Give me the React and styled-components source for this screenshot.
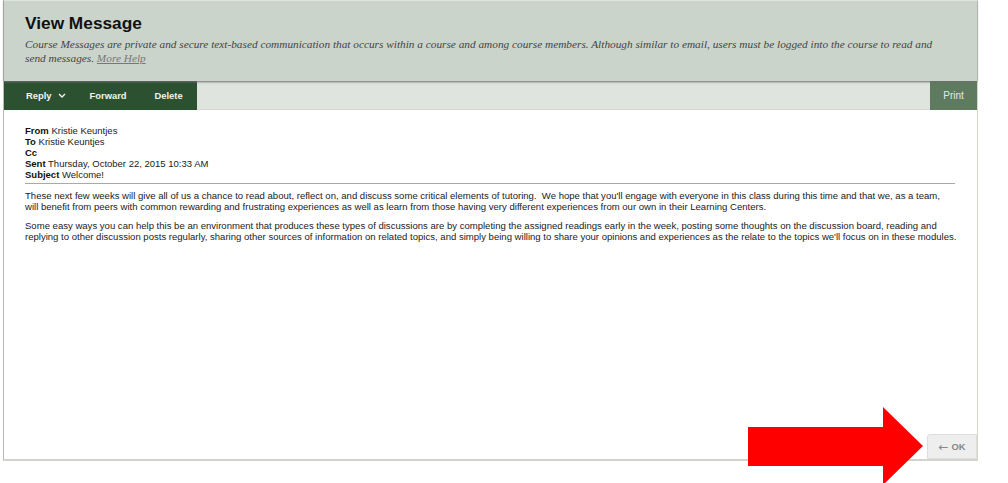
import React from "react";
import styled, { createGlobalStyle } from "styled-components";

const GlobalStyle = createGlobalStyle`
  html, body {
    margin: 0;
    background: #fff;
  }
`;

const Page = styled.div`
  position: relative;
  width: 1008px;
  height: 483px;
  overflow: hidden;
  font-family: "Liberation Sans", Arial, sans-serif;
`;
const Panel = styled.div`
  display: flex;
  flex-direction: column;
  width: 975px;
  height: 461px;
  margin-left: 3px;
  box-sizing: border-box;
  border-left: 1px solid #b9bab4;
  border-right: 1px solid #d6d6cf;
  border-bottom: 2px solid #d3d3c9;
  position: relative;
`;
const Header = styled.div`
  height: 81px;
  box-sizing: border-box;
  padding: 13px 21px 0;
  background: #cbd4cb;
  border-top: 1px solid #dfe4de;
  box-shadow: 0 1px 2px #6f6f6f;
  position: relative;
`;
const Title = styled.h1`
  margin: 0;
  font-size: 17.3px;
  line-height: 18px;
  font-weight: bold;
  color: #111;
`;
const Intro = styled.p`
  margin: 5px 0 0;
  width: 915px;
  font-family: "Liberation Serif", serif;
  font-style: italic;
  font-size: 11.3px;
  line-height: 14px;
  color: #444;
`;
const HelpLink = styled.a`
  color: #777;
  text-decoration: underline;
`;
const Toolbar = styled.div`
  display: flex;
  justify-content: space-between;
  height: 29px;
  background: #dfe4df;
  border-bottom: 1px solid #d3d8d2;
  box-sizing: border-box;
`;
const Actions = styled.div`
  display: flex;
  height: 29px;
  background: #2b5130;
`;
const Action = styled.span`
  display: flex;
  align-items: center;
  gap: 6px;
  height: 29px;
  padding: ${(p) => p.$pad};
  font-size: 9.4px;
  font-weight: bold;
  color: #f2f2f2;
`;
const Print = styled.span`
  display: flex;
  align-items: center;
  justify-content: center;
  width: 47px;
  height: 29px;
  background: #5e7b60;
  font-size: 10px;
  color: #e4e8e4;
`;
const Body = styled.div`
  padding: 15px 21px 0;
  font-size: 9.55px;
  line-height: 11px;
  color: #222;
`;
const MetaRow = styled.div`
  font-size: 9.5px;
  b {
    color: #111;
  }
`;
const Rule = styled.hr`
  margin: 3px 0 6px;
  height: 1px;
  border: 0;
  background: #a9a9a9;
  width: 930px;
`;
const Para = styled.p`
  margin: 0 0 8px;
  width: 940px;
  line-height: 11px;
`;
const OkButton = styled.span`
  position: absolute;
  right: 0;
  bottom: 0;
  display: flex;
  align-items: center;
  justify-content: center;
  gap: 3px;
  width: 50px;
  height: 25px;
  box-sizing: border-box;
  background: #eeeeee;
  border: 1px solid #ddd;
  border-radius: 3px 0 0 0;
  font-size: 9.4px;
  font-weight: bold;
  color: #888;
`;
const BackArrow = styled.span`
  font-family: "DejaVu Sans", sans-serif;
  font-weight: normal;
  font-size: 12px;
`;
const ArrowMark = styled.svg`
  position: absolute;
  left: 748px;
  top: 407px;
`;

const meta = [
  ["From", "Kristie Keuntjes"],
  ["To", "Kristie Keuntjes"],
  ["Cc", ""],
  ["Sent", "Thursday, October 22, 2015 10:33 AM"],
  ["Subject", "Welcome!"],
];

export default function App() {
  return (
    <Page>
      <GlobalStyle />
      <Panel>
        <Header>
          <Title>View Message</Title>
          <Intro>
            Course Messages are private and secure text-based communication that occurs within a
            course and among course members. Although similar to email, users must be logged into
            the course to read and send messages. <HelpLink>More Help</HelpLink>
          </Intro>
        </Header>
        <Toolbar>
          <Actions>
            <Action $pad="0 10px 0 22px">
              Reply
              <svg width="8" height="6" viewBox="0 0 8 6">
                <path d="M1 1l3 3 3-3" fill="none" stroke="#f2f2f2" strokeWidth="1.4" />
              </svg>
            </Action>
            <Action $pad="0 14px">Forward</Action>
            <Action $pad="0 14px">Delete</Action>
          </Actions>
          <Print>Print</Print>
        </Toolbar>
        <Body>
          {meta.map(([label, value]) => (
            <MetaRow key={label}>
              <b>{label}</b> {value}
            </MetaRow>
          ))}
          <Rule />
          <Para>
            These next few weeks will give all of us a chance to read about, reflect on, and discuss
            some critical elements of tutoring.&nbsp; We hope that you'll engage with everyone in
            this class during this time and that we, as a team,
            <br />
            will benefit from peers with common rewarding and frustrating experiences as well as
            learn from those having very different experiences from our own in their Learning
            Centers.
          </Para>
          <Para>
            Some easy ways you can help this be an environment that produces these types of
            discussions are by completing the assigned readings early in the week, posting some
            thoughts on the discussion board, reading and replying to other discussion posts
            regularly, sharing other sources of information on related topics, and simply being
            willing to share your opinions and experiences as the relate to the topics we'll focus
            on in these modules.
          </Para>
        </Body>
        <OkButton>
          <BackArrow>←</BackArrow> OK
        </OkButton>
      </Panel>
      <ArrowMark width="175" height="76" viewBox="0 0 175 76">
        <path d="M0 20H135V0L175 39 135 78V59H0Z" fill="#ff0000" />
      </ArrowMark>
    </Page>
  );
}
